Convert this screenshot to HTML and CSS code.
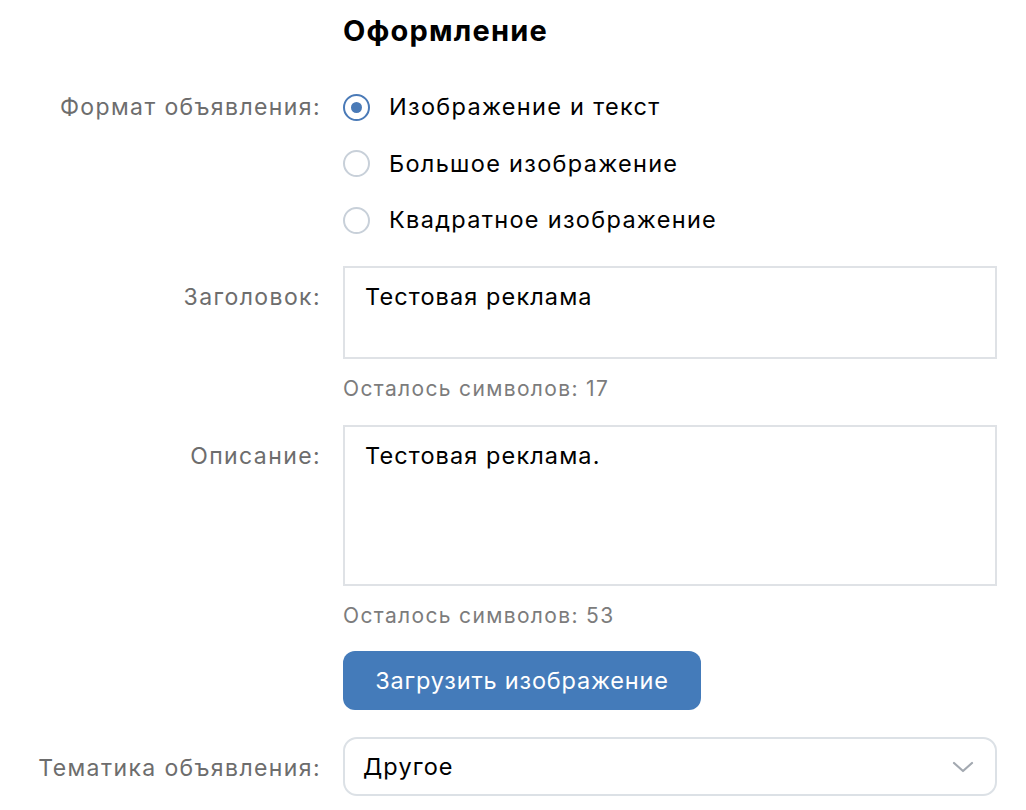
FILE: index.html
```html
<!DOCTYPE html>
<html lang="ru">
<head>
    <meta charset="UTF-8">
    <meta name="viewport" content="width=device-width, initial-scale=1.0">
    <title>Оформление</title>
    <link rel="stylesheet" href="styles.css">
</head>
<body>
    <div class="form">
        <div class="row title-row">
            <div class="label"></div>
            <h2 class="title">Оформление</h2>
        </div>

        <div class="row format-row">
            <div class="label">Формат объявления:</div>
            <div class="radios">
                <label class="radio checked"><span class="circle"></span>Изображение и текст</label>
                <label class="radio"><span class="circle"></span>Большое изображение</label>
                <label class="radio"><span class="circle"></span>Квадратное изображение</label>
            </div>
        </div>

        <div class="row field-row">
            <div class="label">Заголовок:</div>
            <div class="field">
                <textarea class="input input-title">Тестовая реклама</textarea>
                <div class="hint">Осталось символов: 17</div>
            </div>
        </div>

        <div class="row field-row">
            <div class="label">Описание:</div>
            <div class="field">
                <textarea class="input input-desc">Тестовая реклама.</textarea>
                <div class="hint">Осталось символов: 53</div>
                <button class="btn-upload">Загрузить изображение</button>
            </div>
        </div>

        <div class="row select-row">
            <div class="label">Тематика объявления:</div>
            <div class="select">
                <span>Другое</span>
                <svg width="22" height="12" viewBox="0 0 22 12"><path d="M2 2 L11 10 L20 2" fill="none" stroke="#a3a9b1" stroke-width="2.2" stroke-linecap="round" stroke-linejoin="round"/></svg>
            </div>
        </div>
    </div>
</body>
</html>
```

FILE: styles.css
```css
* {
    box-sizing: border-box;
    font-family: Inter, 'Noto Sans', sans-serif;
}

body {
    margin: 0;
    background: #ffffff;
    color: #000000;
}

.form {
    width: 997px;
}

.row {
    display: grid;
    grid-template-columns: 321px 654px;
    column-gap: 22px;
}

.label {
    text-align: right;
    font-size: 23px;
    letter-spacing: 1.4px;
    color: #6d6d6d;
    line-height: 28px;
    white-space: nowrap;
}

.title {
    margin: 0;
    padding-top: 14px;
    font-size: 29px;
    letter-spacing: 1.2px;
    font-weight: 700;
    line-height: 34px;
}

.format-row {
    margin-top: 45px;
}

.radios {
    display: flex;
    flex-direction: column;
    gap: 28.5px;
}

.radio {
    display: flex;
    align-items: center;
    gap: 19px;
    font-size: 23.5px;
    letter-spacing: 1.3px;
    line-height: 28px;
}

.circle {
    width: 27px;
    height: 27px;
    border-radius: 50%;
    border: 2px solid #c8d0d9;
    display: flex;
    align-items: center;
    justify-content: center;
    flex-shrink: 0;
}

.radio.checked .circle {
    border-color: #4a7ab7;
}

.radio.checked .circle::after {
    content: "";
    width: 11px;
    height: 11px;
    border-radius: 50%;
    background: #4a7ab7;
}

.field-row {
    margin-top: 32px;
}

.field-row .label {
    padding-top: 17px;
}

.field-row + .field-row {
    margin-top: 23px;
}

.input {
    display: block;
    width: 100%;
    border: 2px solid #dfe2e6;
    padding: 15px 20px;
    font-size: 23.5px;
    letter-spacing: 1.1px;
    line-height: 28px;
    color: #000;
    resize: none;
    outline: none;
}

.input-title {
    height: 93px;
}

.input-desc {
    height: 161px;
}

.hint {
    margin-top: 17px;
    font-size: 21px;
    letter-spacing: 1.35px;
    line-height: 26px;
    color: #7c7c7c;
}

.btn-upload {
    margin-top: 22px;
    width: 358px;
    height: 59px;
    border: none;
    border-radius: 12px;
    background: #447bba;
    color: #fff;
    font-size: 23.5px;
    letter-spacing: 0.8px;
    cursor: pointer;
}

.select-row {
    margin-top: 27px;
}

.select-row .label {
    padding-top: 17px;
}

.select {
    height: 59px;
    border: 2px solid #dce1e6;
    border-radius: 14px;
    display: flex;
    align-items: center;
    justify-content: space-between;
    padding: 0 21px 0 18px;
    font-size: 23.5px;
    letter-spacing: 1.1px;
}
```
